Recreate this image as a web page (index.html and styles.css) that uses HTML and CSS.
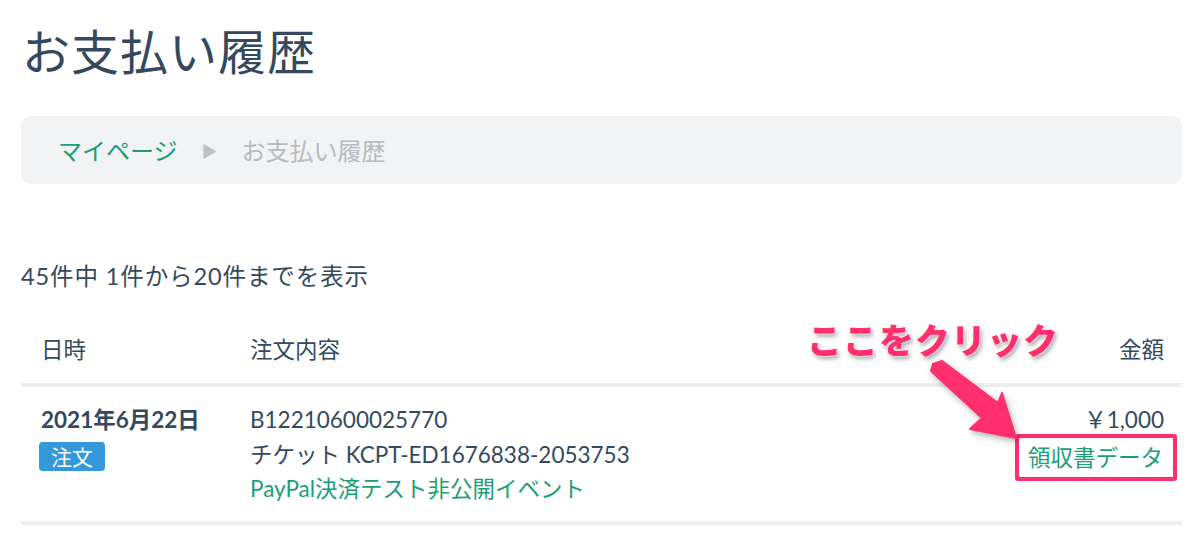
FILE: index.html
```html
<!DOCTYPE html>
<html lang="ja">
<head>
    <meta charset="UTF-8">
    <meta name="viewport" content="width=device-width, initial-scale=1.0">
    <title>お支払い履歴</title>
    <link rel="stylesheet" href="styles.css">
</head>
<body>
    <div class="container">
        <h1>お支払い履歴</h1>

        <nav class="breadcrumb">
            <a href="#">マイページ</a>
            <span class="sep">&#9654;</span>
            <span class="current">お支払い履歴</span>
        </nav>

        <p class="count">45件中 1件から20件までを表示</p>

        <div class="history">
            <div class="row head">
                <div class="col-date">日時</div>
                <div class="col-body">注文内容</div>
                <div class="col-price">金額</div>
            </div>
            <div class="row">
                <div class="col-date">
                    <strong>2021年6月22日</strong>
                    <span class="badge">注文</span>
                </div>
                <div class="col-body">
                    <div>B12210600025770</div>
                    <div>チケット KCPT-ED1676838-2053753</div>
                    <a href="#">PayPal決済テスト非公開イベント</a>
                </div>
                <div class="col-price">
                    <div>￥1,000</div>
                    <a href="#" class="receipt">領収書データ</a>
                </div>
            </div>

            <!-- screenshot annotation -->
            <div class="callout">ここをクリック</div>
            <svg class="arrow" width="110" height="95" viewBox="0 0 110 95">
                <polygon points="11,16 13,9 22,6 78,48 82,38 96,83 50,74 62,63" fill="#ff2f6e" stroke="#ff2f6e" stroke-width="2" stroke-linejoin="round"/>
            </svg>
        </div>
    </div>
</body>
</html>
```

FILE: styles.css
```css
body {
    margin: 0;
    font-family: Lato, "Noto Sans CJK JP", sans-serif;
    color: #34495e;
    background: white;
}
a {
    color: #1b9e77;
    text-decoration: none;
}
.container {
    padding: 0 18px 0 21px;
}
h1 {
    font-size: 48px;
    font-weight: normal;
    margin: 0;
    padding: 22px 0 0 1px;
    line-height: 60px;
    letter-spacing: 1px;
}
.breadcrumb {
    margin-top: 34px;
    height: 68px;
    background: #f2f3f5;
    border-radius: 10px;
    display: flex;
    align-items: center;
    gap: 24px;
    padding-left: 37px;
    font-size: 24px;
}
.breadcrumb a {
    margin-top: -2px;
}
.breadcrumb .sep {
    color: #bdc1c5;
    font-size: 16px;
}
.breadcrumb .current {
    color: #b7bbbf;
    margin-top: -2px;
}
.count {
    font-size: 23.5px;
    margin: 77px 0 0;
    line-height: 30px;
    letter-spacing: 0.9px;
}
.history {
    position: relative;
    margin-top: 33px;
    font-size: 22.5px;
}
.row {
    display: flex;
    border-bottom: 4px solid #eceeef;
    line-height: 34px;
}
.row.head {
    padding: 9px 0 16px;
}
.row:not(.head) {
    padding: 16px 0 14px;
    line-height: 34.5px;
}
.col-date {
    width: 209px;
    padding-left: 20px;
    display: flex;
    flex-direction: column;
    align-items: flex-start;
}
.col-body {
    flex: 1;
    display: flex;
    flex-direction: column;
}
.col-price {
    padding-right: 18px;
    text-align: right;
}
.badge {
    background: #3498db;
    color: white;
    border-radius: 4px;
    font-size: 21px;
    line-height: 29px;
    padding: 0 12px;
    margin-top: 4px;
    margin-left: -2px;
}
.receipt {
    display: inline-block;
    border: 4px solid #ff2f6e;
    border-radius: 3px;
    padding: 0 10px 0 9px;
    margin-right: -13px;
    margin-top: -4px;
    line-height: 39px;
}
.callout {
    position: absolute;
    top: -11px;
    left: 786px;
    font-size: 35px;
    font-weight: 900;
    color: #ff2f6e;
    letter-spacing: 1px;
    text-shadow: 0 0 2px white, 0 0 2px white, 2px 3px 4px rgba(0, 0, 0, 0.35);
}
.arrow {
    position: absolute;
    top: 31px;
    left: 899px;
    filter: drop-shadow(2px 3px 3px rgba(0, 0, 0, 0.3));
}
```
